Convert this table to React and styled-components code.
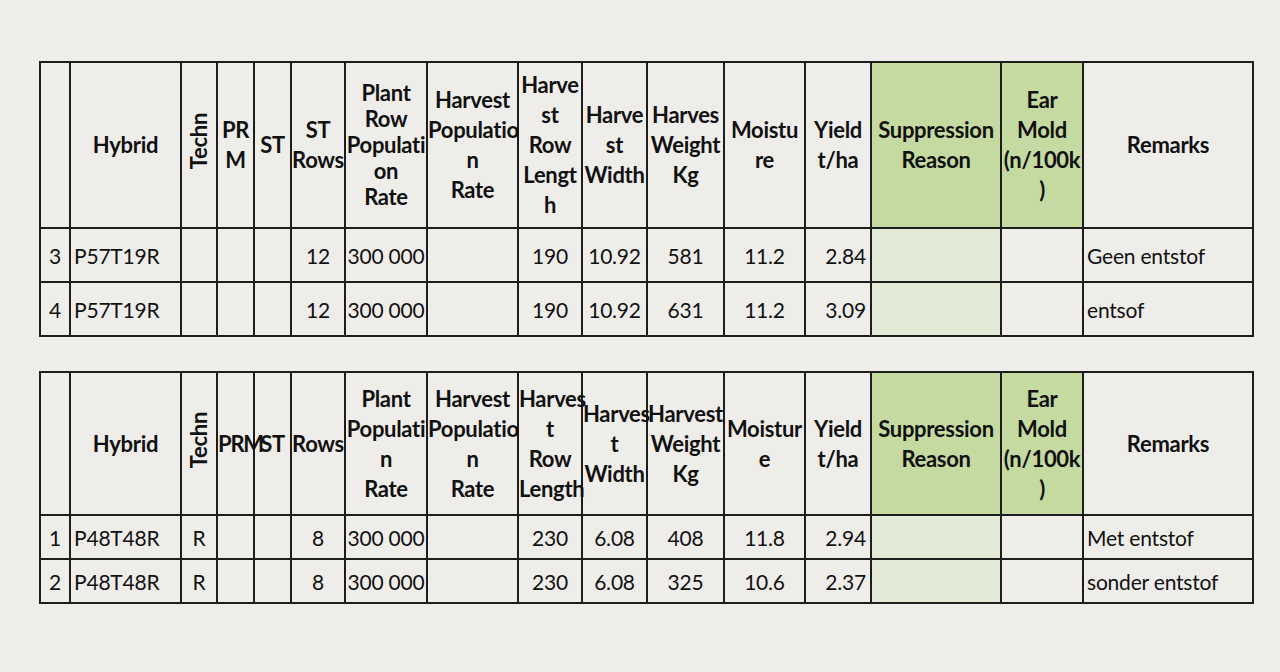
import React from 'react';
import styled, { createGlobalStyle } from 'styled-components';

const GlobalStyle = createGlobalStyle`
  html, body {
    margin: 0;
    padding: 0;
    background: #efedea;
  }
  body {
    font-family: Lato, "Open Sans", sans-serif;
    color: #111;
  }
`;

const Page = styled.div`
  display: flex;
  flex-direction: column;
  gap: 34px;
  padding: 61px 0 0 39px;
  height: 672px;
  box-sizing: border-box;
`;

const Grid = styled.table`
  border-collapse: collapse;
  table-layout: fixed;
  width: 1214px;
  font-size: 21px;
`;

const HeadRow = styled.tr`
  height: ${(props) => props.$height}px;
`;

const BodyRow = styled.tr`
  height: ${(props) => props.$height}px;
`;

const HeadCell = styled.th`
  border: 2px solid #1d1d1d;
  padding: 0;
  font-size: 22px;
  font-weight: 700;
  text-align: center;
  vertical-align: middle;
  white-space: nowrap;
  line-height: ${(props) => props.$lh || 30}px;
  letter-spacing: ${(props) => (props.$tight ? '-1.2px' : '-0.3px')};
  background: ${(props) => (props.$green ? '#c5daa1' : 'transparent')};
`;

const BodyCell = styled.td`
  border: 2px solid #1d1d1d;
  padding: ${(props) =>
    props.$align === 'right' ? '0 4px 0 0' : props.$align === 'left' ? '0 0 0 3px' : '0'};
  text-align: ${(props) => props.$align || 'center'};
  vertical-align: middle;
  white-space: nowrap;
  letter-spacing: -0.2px;
  background: ${(props) => (props.$green ? '#e2e9d4' : 'transparent')};
`;

const Rotated = styled.span`
  display: inline-block;
  writing-mode: vertical-rl;
  transform: rotate(180deg);
  line-height: 1;
`;

const widths = [30, 111, 36, 37, 37, 54, 82, 91, 64, 65, 77, 81, 66, 130, 82, 170];

// column alignment for the body rows
const aligns = [
  'center', 'left', 'center', 'center', 'center', 'center', 'center', 'center',
  'center', 'center', 'center', 'center', 'right', 'center', 'center', 'left',
];

const greenCols = [13, 14];

const firstHeads = [
  [''],
  ['Hybrid'],
  'ROT',
  ['PR', 'M'],
  ['ST'],
  ['ST', 'Rows'],
  ['Plant', 'Row', 'Populati', 'on', 'Rate'],
  ['Harvest', 'Populatio', 'n', 'Rate'],
  ['Harve', 'st', 'Row', 'Lengt', 'h'],
  ['Harve', 'st', 'Width'],
  ['Harves', 'Weight', 'Kg'],
  ['Moistu', 're'],
  ['Yield', 't/ha'],
  ['Suppression', 'Reason'],
  ['Ear', 'Mold', '(n/100k', ')'],
  ['Remarks'],
];

const secondHeads = [
  [''],
  ['Hybrid'],
  'ROT',
  ['PRM'],
  ['ST'],
  ['Rows'],
  ['Plant', 'Populati', 'n', 'Rate'],
  ['Harvest', 'Populatio', 'n', 'Rate'],
  ['Harves', 't', 'Row', 'Length'],
  ['Harves', 't', 'Width'],
  ['Harvest', 'Weight', 'Kg'],
  ['Moistur', 'e'],
  ['Yield', 't/ha'],
  ['Suppression', 'Reason'],
  ['Ear', 'Mold', '(n/100k', ')'],
  ['Remarks'],
];

const firstRows = [
  ['3', 'P57T19R', '', '', '', '12', '300 000', '', '190', '10.92', '581', '11.2', '2.84', '', '', 'Geen entstof'],
  ['4', 'P57T19R', '', '', '', '12', '300 000', '', '190', '10.92', '631', '11.2', '3.09', '', '', 'entsof'],
];

const secondRows = [
  ['1', 'P48T48R', 'R', '', '', '8', '300 000', '', '230', '6.08', '408', '11.8', '2.94', '', '', 'Met entstof'],
  ['2', 'P48T48R', 'R', '', '', '8', '300 000', '', '230', '6.08', '325', '10.6', '2.37', '', '', 'sonder entstof'],
];

const TrialTable = ({ heads, rows, headHeight, rowHeight, tightCol }) => (
  <Grid>
    <colgroup>
      {widths.map((w, i) => (
        <col key={i} style={{ width: w }} />
      ))}
    </colgroup>
    <thead>
      <HeadRow $height={headHeight}>
        {heads.map((lines, i) => (
          <HeadCell
            key={i}
            $green={greenCols.includes(i)}
            $lh={i === tightCol ? 26 : 30}
            $tight={lines.length === 1 && lines[0].length === 3 && i === 3}
          >
            {lines === 'ROT' ? (
              <Rotated>Techn</Rotated>
            ) : (
              lines.map((line, j) => (
                <React.Fragment key={j}>
                  {j > 0 && <br />}
                  {line}
                </React.Fragment>
              ))
            )}
          </HeadCell>
        ))}
      </HeadRow>
    </thead>
    <tbody>
      {rows.map((row, r) => (
        <BodyRow key={r} $height={rowHeight}>
          {row.map((val, i) => (
            <BodyCell key={i} $align={aligns[i]} $green={i === 13}>
              {val}
            </BodyCell>
          ))}
        </BodyRow>
      ))}
    </tbody>
  </Grid>
);

export default function App() {
  return (
    <>
      <GlobalStyle />
      <Page>
        <TrialTable heads={firstHeads} rows={firstRows} headHeight={166} rowHeight={54} tightCol={6} />
        <TrialTable heads={secondHeads} rows={secondRows} headHeight={143} rowHeight={44} />
      </Page>
    </>
  );
}
